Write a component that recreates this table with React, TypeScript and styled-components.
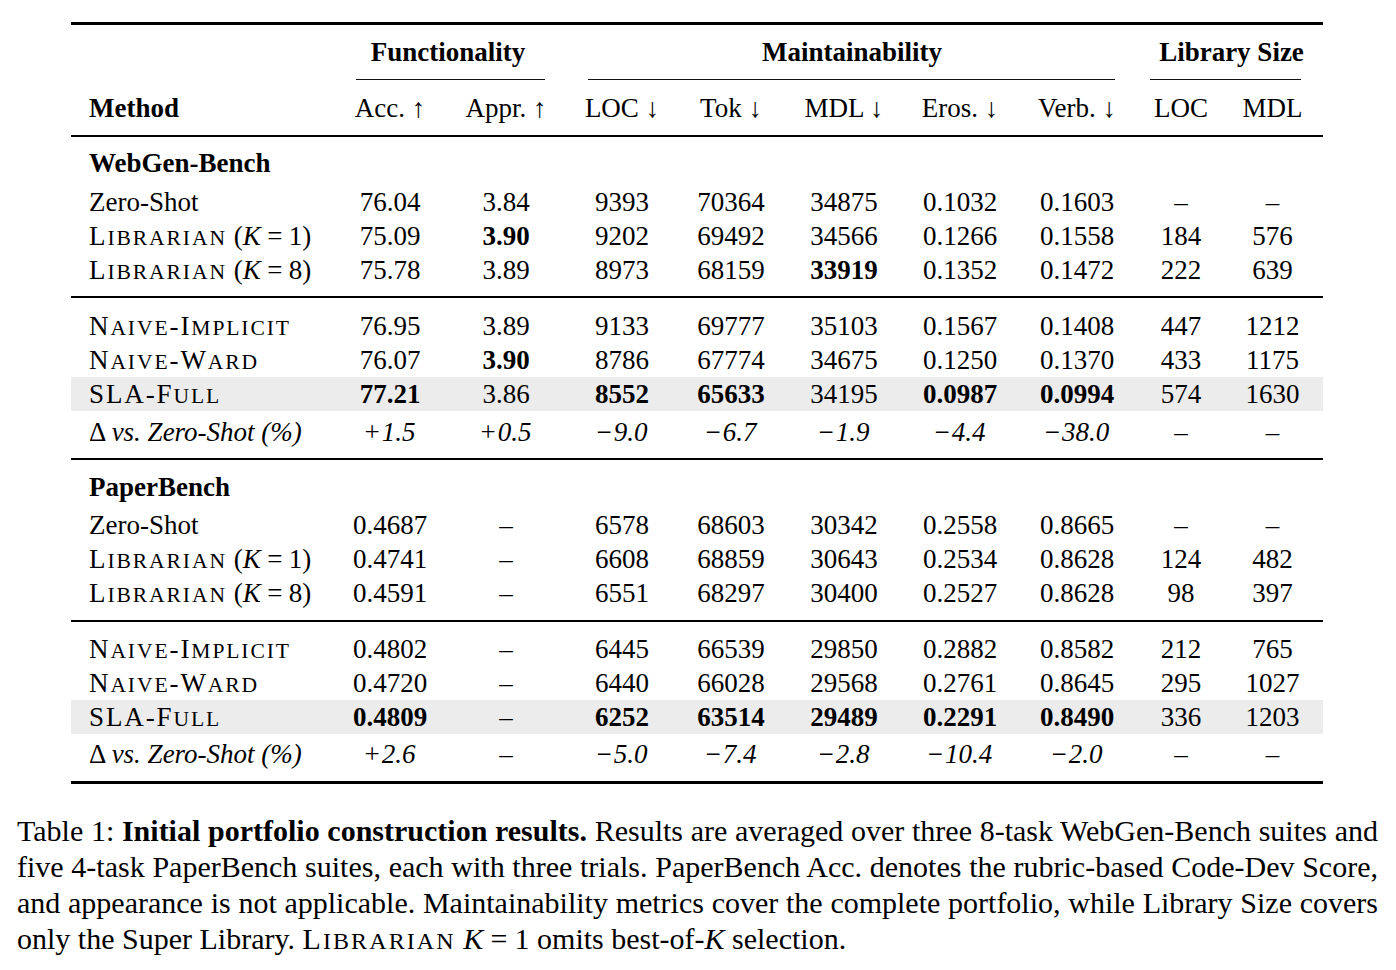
import React from 'react';
import styled, { createGlobalStyle } from 'styled-components';

type Row = {
  method: React.ReactNode;
  values: string[];
  bold?: number[];
  shaded?: boolean;
};

type Section = {
  title: string;
  baseline: Row[];
  ours: Row[];
  delta: string[];
};

const COLUMNS = '261px 116px 116px 116px 102px 124px 108px 126px 82px 101px';

const metricHeaders = ['Acc. ↑', 'Appr. ↑', 'LOC ↓', 'Tok ↓', 'MDL ↓', 'Eros. ↓', 'Verb. ↓', 'LOC', 'MDL'];

/** latex-like small caps: lowercase runs become smaller capitals */
function SmallCaps({ children }: { children: string }) {
  const parts = children.split(/([a-z]+)/).filter(Boolean);
  return (
    <CapsText>
      {parts.map((p, i) => (/[a-z]/.test(p) ? <LowerCap key={i}>{p}</LowerCap> : <React.Fragment key={i}>{p}</React.Fragment>))}
    </CapsText>
  );
}

function Librarian({ k }: { k: number }) {
  return (
    <>
      <SmallCaps>Librarian</SmallCaps> (<MathVar>K</MathVar>
      <Equals>=</Equals>
      {k})
    </>
  );
}

// built at render time so the styled parts below are defined
function buildSections(): Section[] {
  return [
    {
      title: 'WebGen-Bench',
      baseline: [
        { method: 'Zero-Shot', values: ['76.04', '3.84', '9393', '70364', '34875', '0.1032', '0.1603', '–', '–'] },
        { method: <Librarian k={1} />, values: ['75.09', '3.90', '9202', '69492', '34566', '0.1266', '0.1558', '184', '576'], bold: [1] },
        { method: <Librarian k={8} />, values: ['75.78', '3.89', '8973', '68159', '33919', '0.1352', '0.1472', '222', '639'], bold: [4] },
      ],
      ours: [
        { method: <SmallCaps>Naive-Implicit</SmallCaps>, values: ['76.95', '3.89', '9133', '69777', '35103', '0.1567', '0.1408', '447', '1212'] },
        { method: <SmallCaps>Naive-Ward</SmallCaps>, values: ['76.07', '3.90', '8786', '67774', '34675', '0.1250', '0.1370', '433', '1175'], bold: [1] },
        {
          method: <SmallCaps>SLA-Full</SmallCaps>,
          values: ['77.21', '3.86', '8552', '65633', '34195', '0.0987', '0.0994', '574', '1630'],
          bold: [0, 2, 3, 5, 6],
          shaded: true,
        },
      ],
      delta: ['+1.5', '+0.5', '−9.0', '−6.7', '−1.9', '−4.4', '−38.0', '–', '–'],
    },
    {
      title: 'PaperBench',
      baseline: [
        { method: 'Zero-Shot', values: ['0.4687', '–', '6578', '68603', '30342', '0.2558', '0.8665', '–', '–'] },
        { method: <Librarian k={1} />, values: ['0.4741', '–', '6608', '68859', '30643', '0.2534', '0.8628', '124', '482'] },
        { method: <Librarian k={8} />, values: ['0.4591', '–', '6551', '68297', '30400', '0.2527', '0.8628', '98', '397'] },
      ],
      ours: [
        { method: <SmallCaps>Naive-Implicit</SmallCaps>, values: ['0.4802', '–', '6445', '66539', '29850', '0.2882', '0.8582', '212', '765'] },
        { method: <SmallCaps>Naive-Ward</SmallCaps>, values: ['0.4720', '–', '6440', '66028', '29568', '0.2761', '0.8645', '295', '1027'] },
        {
          method: <SmallCaps>SLA-Full</SmallCaps>,
          values: ['0.4809', '–', '6252', '63514', '29489', '0.2291', '0.8490', '336', '1203'],
          bold: [0, 2, 3, 4, 5, 6],
          shaded: true,
        },
      ],
      delta: ['+2.6', '–', '−5.0', '−7.4', '−2.8', '−10.4', '−2.0', '–', '–'],
    },
  ];
}

function DeltaValue({ value }: { value: string }) {
  if (value === '–') return <>{value}</>;
  return (
    <>
      <Sign>{value[0]}</Sign>
      <Italic>{value.slice(1)}</Italic>
    </>
  );
}

function DataRow({ row }: { row: Row }) {
  return (
    <TableRow $shaded={row.shaded}>
      <MethodCell>{row.method}</MethodCell>
      {row.values.map((v, i) => (
        <ValueCell key={i} $bold={row.bold?.includes(i)}>
          {v}
        </ValueCell>
      ))}
    </TableRow>
  );
}

/** results table with caption */
export default function App() {
  const sections = buildSections();

  return (
    <Page>
      <GlobalStyle />
      <Table>
        <HeaderBlock>
          <GroupRow>
            <GroupCell $from={2} $to={4} $left={24} $right={19}>
              <GroupTitle>Functionality</GroupTitle>
            </GroupCell>
            <GroupCell $from={4} $to={9} $left={24} $right={25}>
              <GroupTitle>Maintainability</GroupTitle>
            </GroupCell>
            <GroupCell $from={9} $to={11} $left={10} $right={22}>
              <GroupTitle>Library Size</GroupTitle>
            </GroupCell>
          </GroupRow>
          <ColumnRow>
            <MethodCell $bold>Method</MethodCell>
            {metricHeaders.map((h, i) => (
              <ValueCell key={i}>{h}</ValueCell>
            ))}
          </ColumnRow>
        </HeaderBlock>

        {sections.map((s, si) => (
          <React.Fragment key={s.title}>
            <Block $top={si === 0 ? 9 : 10} $bottom={si === 0 ? 9 : 10}>
              <SectionTitle $gap={si === 0 ? 5 : 4}>{s.title}</SectionTitle>
              {s.baseline.map((r, i) => (
                <DataRow key={i} row={r} />
              ))}
            </Block>
            <Block $top={si === 0 ? 11 : 10} $bottom={si === 0 ? 9 : 10} $thick={si === sections.length - 1}>
              {s.ours.map((r, i) => (
                <DataRow key={i} row={r} />
              ))}
              <DeltaRow $pad={si === 0 ? 4 : 3}>
                <MethodCell>
                  Δ <Italic>vs. Zero-Shot (%)</Italic>
                </MethodCell>
                {s.delta.map((d, i) => (
                  <ValueCell key={i}>
                    <DeltaValue value={d} />
                  </ValueCell>
                ))}
              </DeltaRow>
            </Block>
          </React.Fragment>
        ))}
      </Table>

      <Caption>
        <CaptionLine>
          Table 1: <strong>Initial portfolio construction results.</strong> Results are averaged over three 8-task
          WebGen-Bench suites and
        </CaptionLine>
        <CaptionLine>
          five 4-task PaperBench suites, each with three trials. PaperBench Acc. denotes the rubric-based Code-Dev
          Score,
        </CaptionLine>
        <CaptionLine>
          and appearance is not applicable. Maintainability metrics cover the complete portfolio, while Library Size
          covers
        </CaptionLine>
        <CaptionLine $last>
          only the Super Library. <SmallCaps>Librarian</SmallCaps> <MathVar>K</MathVar>
          <Equals>=</Equals>1 omits best-of-<MathVar>K</MathVar> selection.
        </CaptionLine>
      </Caption>
    </Page>
  );
}

const GlobalStyle = createGlobalStyle`
  body {
    margin: 0;
    background: #ffffff;
    color: #000000;
    font-family: "Liberation Serif", "Times New Roman", serif;
  }
`;

const Page = styled.div`
  width: 1396px;
  height: 970px;
  padding-top: 22px;
  box-sizing: border-box;
  font-size: 27px;
`;

const Table = styled.div`
  display: flex;
  flex-direction: column;
  width: 1252px;
  margin-left: 71px;
  border-top: 3px solid #000;
`;

const HeaderBlock = styled.div`
  border-bottom: 2px solid #000;
`;

const GroupRow = styled.div`
  display: grid;
  grid-template-columns: ${COLUMNS};
  height: 55px;
`;

const GroupCell = styled.div<{ $from: number; $to: number; $left: number; $right: number }>`
  grid-column: ${({ $from, $to }) => `${$from} / ${$to}`};
  display: flex;
  flex-direction: column;
  justify-content: space-between;
  padding-top: 10px;

  &::after {
    content: '';
    height: 1.3px;
    margin: 0 ${({ $right }) => $right}px 0 ${({ $left }) => $left}px;
    background: #111;
  }
`;

const GroupTitle = styled.div`
  font-weight: 700;
  line-height: 34px;
  text-align: center;
`;

const TableRow = styled.div<{ $shaded?: boolean }>`
  display: grid;
  grid-template-columns: ${COLUMNS};
  height: 34px;
  line-height: 34px;
  background: ${({ $shaded }) => ($shaded ? '#ececec' : 'transparent')};
`;

const ColumnRow = styled(TableRow)`
  height: 55px;
  align-items: center;
`;

const DeltaRow = styled(TableRow)<{ $pad: number }>`
  height: auto;
  padding-top: ${({ $pad }) => $pad}px;
`;

const Block = styled.div<{ $top: number; $bottom: number; $thick?: boolean }>`
  padding: ${({ $top }) => $top}px 0 ${({ $bottom }) => $bottom}px;
  border-bottom: ${({ $thick }) => ($thick ? 3 : 2)}px solid #000;
`;

const SectionTitle = styled.div<{ $gap: number }>`
  padding-left: 18px;
  margin-bottom: ${({ $gap }) => $gap}px;
  font-weight: 700;
  line-height: 34px;
`;

const MethodCell = styled.div<{ $bold?: boolean }>`
  padding-left: 18px;
  white-space: nowrap;
  font-weight: ${({ $bold }) => ($bold ? 700 : 400)};
`;

const ValueCell = styled.div<{ $bold?: boolean }>`
  text-align: center;
  white-space: nowrap;
  font-weight: ${({ $bold }) => ($bold ? 700 : 400)};
`;

const CapsText = styled.span`
  letter-spacing: 0.07em;
`;

const LowerCap = styled.span`
  font-size: 0.8em;
  text-transform: uppercase;
`;

const MathVar = styled.i`
  font-style: italic;
`;

const Equals = styled.span`
  margin: 0 0.24em;
`;

const Italic = styled.i`
  font-style: italic;
`;

const Sign = styled.span`
  font-style: normal;
  margin-right: 0.08em;
`;

const Caption = styled.div`
  margin: 29px 0 0 17px;
  width: 1361px;
  font-size: 30px;
  line-height: 36px;
`;

const CaptionLine = styled.div<{ $last?: boolean }>`
  text-align: justify;
  text-align-last: ${({ $last }) => ($last ? 'left' : 'justify')};
  white-space: nowrap;

  strong {
    font-weight: 700;
  }
`;
